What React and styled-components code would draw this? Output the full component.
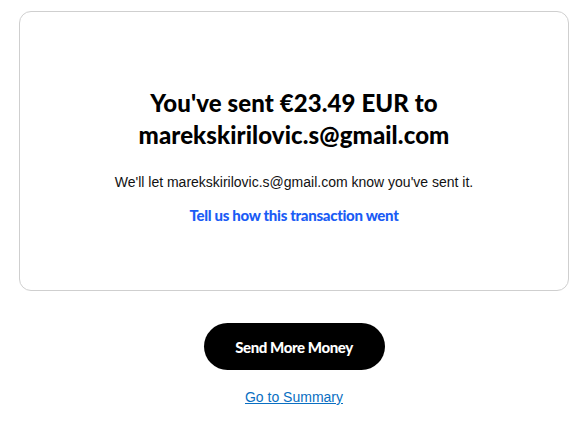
import React from "react";
import styled, { createGlobalStyle } from "styled-components";

const GlobalStyle = createGlobalStyle`
  body {
    margin: 0;
    background: #ffffff;
    font-family: "Liberation Sans", Arial, sans-serif;
  }
`;

const Page = styled.div`
  padding: 11px 17px 0 19px;
  display: flex;
  flex-direction: column;
  align-items: center;
`;

const Card = styled.div`
  box-sizing: border-box;
  width: 100%;
  height: 280px;
  border: 1px solid #cfcfcf;
  border-radius: 12px;
  display: flex;
  flex-direction: column;
  align-items: center;
  justify-content: center;
  padding: 8px 24px 0;
  text-align: center;
`;

const Title = styled.h1`
  margin: 0 0 21px;
  font-family: Lato, "Noto Sans", sans-serif;
  font-weight: 900;
  font-size: 24px;
  line-height: 32px;
  letter-spacing: 0.1px;
  color: #000;
`;

const Note = styled.p`
  margin: 0 0 14px;
  font-size: 14px;
  line-height: 20px;
  color: #111;
`;

const FeedbackLink = styled.a`
  font-family: Lato, "Noto Sans", sans-serif;
  font-weight: 900;
  font-size: 15px;
  letter-spacing: -0.3px;
  color: #1b5cf5;
  text-decoration: none;
`;

const Actions = styled.div`
  margin-top: 32px;
  display: flex;
  flex-direction: column;
  align-items: center;
  gap: 19px;
`;

const PrimaryButton = styled.button`
  width: 181px;
  height: 47px;
  border: none;
  border-radius: 24px;
  background: #000;
  color: #fff;
  font-family: Lato, "Noto Sans", sans-serif;
  font-weight: 900;
  font-size: 15px;
  letter-spacing: -0.4px;
  cursor: pointer;
`;

const SummaryLink = styled.a`
  font-size: 14px;
  color: #0a6fc2;
  text-decoration: underline;
`;

export default function App() {
  return (
    <>
      <GlobalStyle />
      <Page>
        <Card>
          <Title>
            You've sent €23.49 EUR to
            <br />
            marekskirilovic.s@gmail.com
          </Title>
          <Note>We'll let marekskirilovic.s@gmail.com know you've sent it.</Note>
          <FeedbackLink href="#">Tell us how this transaction went</FeedbackLink>
        </Card>
        <Actions>
          <PrimaryButton>Send More Money</PrimaryButton>
          <SummaryLink href="#">Go to Summary</SummaryLink>
        </Actions>
      </Page>
    </>
  );
}
